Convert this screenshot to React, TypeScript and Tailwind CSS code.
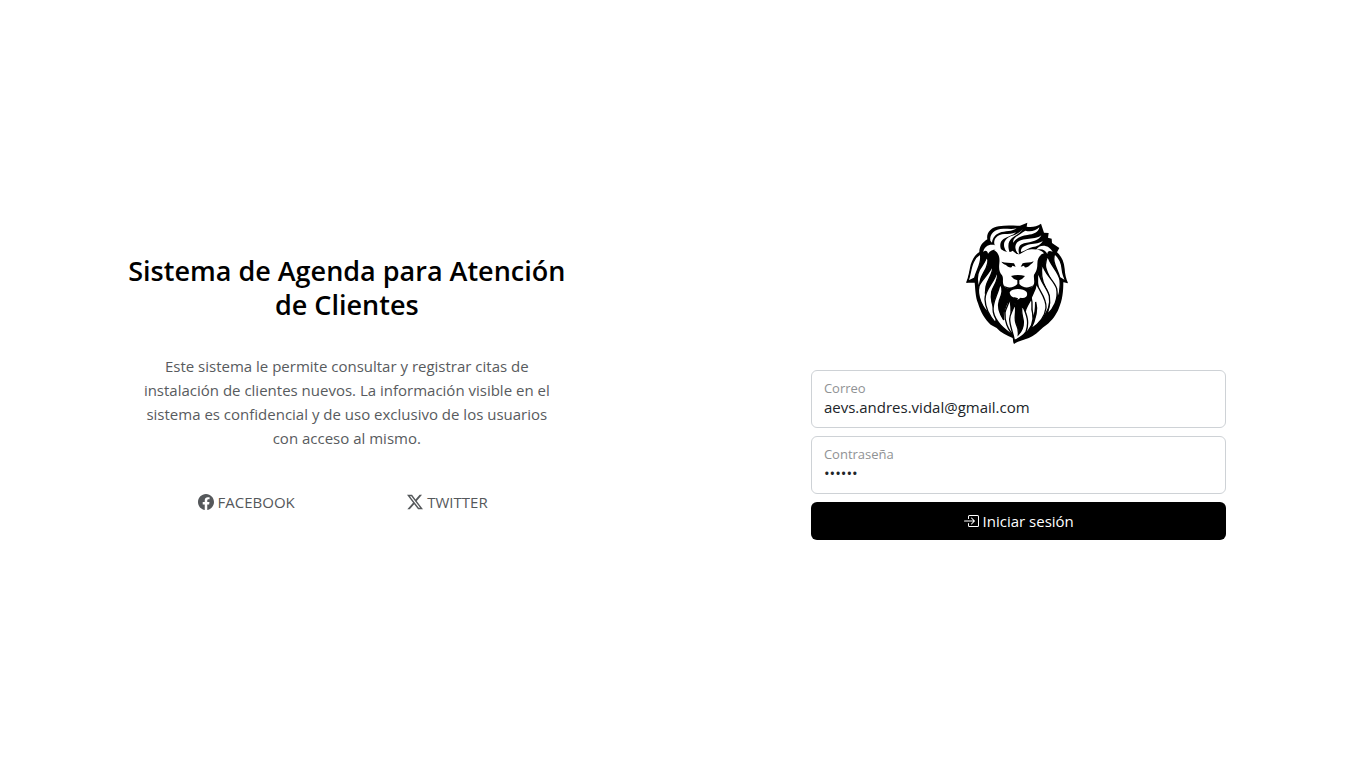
import { BsBoxArrowInRight, BsFacebook, BsTwitterX } from "react-icons/bs";

function LionLogo() {
  return (
    <svg viewBox="0 0 324 378" className="h-[126px] w-[108px]" role="img" aria-label="León">
      <path
        fill="#000"
        d="M70 58C66 38 82 22 104 19C128 15 152 18 168 17L190 8L188 20C204 22 218 20 231 11L240 38L254 39L252 53L263 56L264 69L286 84L279 97C292 108 300 124 302 146C303 162 306 176 312 189L298 187C298 212 296 240 284 266C277 283 264 302 248 314C232 325 222 338 206 348C190 359 166 360 150 372C146 366 148 360 146 354C128 346 110 338 98 324L80 314C62 298 50 276 42 250C34 230 34 206 32 188L6 188C14 170 16 150 20 134C26 116 34 104 46 96C46 80 54 68 70 58Z"
      />
      <g fill="#fff">
        {/* Crown */}
        <path d="M79 62C76 42 92 26 118 26C132 26 146 28 158 25C146 35 122 33 107 38C94 43 86 52 84 68Z" />
        <path d="M92 76C86 58 100 42 122 42C134 42 144 42 156 37C148 46 134 49 124 54C108 62 106 74 112 92C106 86 98 82 92 76Z" />
        <path d="M176 28C170 40 154 46 144 54C132 64 130 80 138 99C130 99 124 94 121 82C117 66 126 56 140 49C156 44 168 38 176 28Z" />
        <path d="M184 32C198 36 214 34 226 22C224 38 208 43 190 45C172 47 156 54 148 68C144 54 166 44 184 32Z" />
        <path d="M232 46C222 54 204 56 190 57C168 58 154 66 154 82C155 92 158 98 166 103C160 84 166 74 180 70C202 66 226 62 232 46Z" />
        <path d="M236 62C232 74 218 79 206 81C194 84 182 94 171 96C169 84 180 77 198 73C214 70 228 70 236 62Z" />
        {/* Ears */}
        <path d="M58 96C60 76 84 68 102 80L122 96C104 87 84 84 72 101C70 92 64 90 58 96Z" />
        <path d="M216 90C226 72 254 72 266 96C258 90 250 92 250 102C244 90 232 84 216 90Z" />
        {/* Face */}
        <path d="M90 90C100 82 112 90 122 94C132 98 142 96 146 92C154 98 160 106 168 102C180 96 190 86 206 88C222 88 234 92 240 100C226 104 220 116 220 132C220 148 216 156 210 164C208 176 214 186 208 196C200 210 180 208 163 200C148 208 126 210 119 196C114 186 120 176 114 166C106 156 104 148 106 130C108 112 104 98 90 90Z" />
      </g>
      <g fill="#fff" stroke="#000" strokeWidth="4">
        {/* Left mane */}
        <path d="M49 102C56 126 38 148 32 174L12 184C20 160 20 142 28 126C34 112 42 106 49 102Z" />
        <path d="M68 110C78 124 68 144 58 160C50 174 46 184 46 206C38 186 38 166 46 150C54 136 64 126 68 110Z" />
        <path d="M86 136C90 160 70 178 66 200C62 220 66 250 82 286C54 266 38 226 45 198C52 180 76 162 86 136Z" />
        <path d="M100 154C106 182 88 196 83 216C79 238 87 262 96 282C98 292 97 302 94 308C78 290 64 266 63 238C62 208 90 190 100 154Z" />
        <path d="M108 190C120 210 112 226 106 242C99 262 108 282 119 300C116 276 124 264 132 240C138 264 130 280 133 298C135 310 141 324 144 344C120 326 94 306 88 276C82 246 104 222 108 190Z" />
        {/* Right mane */}
        <path d="M272 101C288 114 294 132 295 150C296 162 300 172 306 185L287 173C282 148 262 128 272 101Z" />
        <path d="M252 108C254 130 284 154 288 180C290 200 288 218 281 238C279 198 250 170 245 142C243 130 246 118 252 108Z" />
        <path d="M235 130C240 162 270 180 278 206C284 236 270 266 248 286C261 248 257 222 245 204C234 184 228 164 235 130Z" />
        <path d="M223 154C228 186 250 204 256 228C260 252 252 278 232 298C239 268 235 246 229 226C221 204 216 184 223 154Z" />
        <path d="M217 190C228 216 248 234 246 264C243 288 228 310 200 328C214 300 222 270 215 246C215 262 214 280 208 296C204 270 196 254 202 232C208 218 215 208 217 190Z" />
        <path d="M202 236C208 256 200 264 206 280C210 300 206 324 178 346C188 320 188 306 184 292C179 272 190 258 202 236Z" />
        {/* Beard */}
        <path d="M136 238C146 260 137 278 144 302C148 316 152 326 154 352C130 330 121 300 123 278C125 264 134 256 136 238Z" />
        <path d="M153 250C159 276 149 292 156 310C162 322 164 332 163 344C174 332 179 322 178 304C176 288 169 276 175 256C190 286 196 308 186 336C176 350 164 356 151 361C147 336 137 318 137 298C137 280 148 270 153 250Z" />
      </g>
      <g fill="#000">
        {/* Brows and eyes */}
        <path d="M112 125C124 130 138 127 150 130L155 140L145 137L143 142C136 143 130 140 126 135C120 133 115 129 112 125Z" />
        <path d="M209 124C198 129 186 127 176 130L170 140L180 137L182 142C188 143 194 140 198 135C203 132 207 128 209 124Z" />
        {/* Nose and muzzle */}
        <path d="M141 168C154 164 170 164 183 168L174 177L166 181L166 192C176 204 194 206 207 196C200 212 178 210 163 205C148 212 126 210 119 196C130 206 150 204 160 192L160 181L150 177Z" />
      </g>
      <path
        fill="#fff"
        d="M137 217C144 204 178 204 188 216C194 232 180 236 170 233L160 240L162 234C148 234 138 230 137 217Z"
      />
    </svg>
  );
}

const socialLinks = [
  { name: "FACEBOOK", href: "#facebook", Icon: BsFacebook },
  { name: "TWITTER", href: "#twitter", Icon: BsTwitterX },
];

const fields = [
  { id: "correo", label: "Correo", type: "email", value: "aevs.andres.vidal@gmail.com" },
  { id: "contrasena", label: "Contraseña", type: "password", value: "123456" },
];

export default function App() {
  return (
    <main className="flex min-h-screen items-center justify-center bg-white font-['Open_Sans','Noto_Sans',sans-serif] text-[15px] leading-6 text-[#212529]">
      <div className="grid w-full max-w-[1138px] grid-cols-1 items-center justify-between gap-y-12 md:grid-cols-[41%_41%]">
        <section className="text-center">
          <h1 className="px-2 text-[27px] leading-[34px] font-semibold text-black">
            Sistema de Agenda para Atención de Clientes
          </h1>
          <p className="mt-8 px-6 text-[#585b5e]">
            Este sistema le permite consultar y registrar citas de instalación de clientes nuevos. La
            información visible en el sistema es confidencial y de uso exclusivo de los usuarios con
            acceso al mismo.
          </p>
          <nav className="mt-10 grid grid-cols-2 px-8">
            {socialLinks.map(({ name, href, Icon }) => (
              <a key={name} href={href} className="flex items-center justify-center gap-1 text-[#55585b]">
                <Icon className="size-4" />
                {name}
              </a>
            ))}
          </nav>
        </section>

        <section className="flex flex-col items-center px-[26px] pb-2">
          <LionLogo />
          <form className="mt-6 flex w-full flex-col gap-2" onSubmit={(e) => e.preventDefault()}>
            {fields.map((f) => (
              <div
                key={f.id}
                className="flex h-[58px] flex-col rounded-md border border-[#ced2d6] px-3 pt-2"
              >
                <label htmlFor={f.id} className="text-[13px] leading-[18px] text-[#909294]">
                  {f.label}
                </label>
                <input
                  id={f.id}
                  type={f.type}
                  defaultValue={f.value}
                  autoComplete="off"
                  className="h-5 w-full bg-transparent leading-5 outline-none"
                />
              </div>
            ))}
            <button
              type="submit"
              className="flex h-[38px] items-center justify-center gap-1 rounded-md bg-black text-white"
            >
              <BsBoxArrowInRight className="size-4" />
              Iniciar sesión
            </button>
          </form>
        </section>
      </div>
    </main>
  );
}
